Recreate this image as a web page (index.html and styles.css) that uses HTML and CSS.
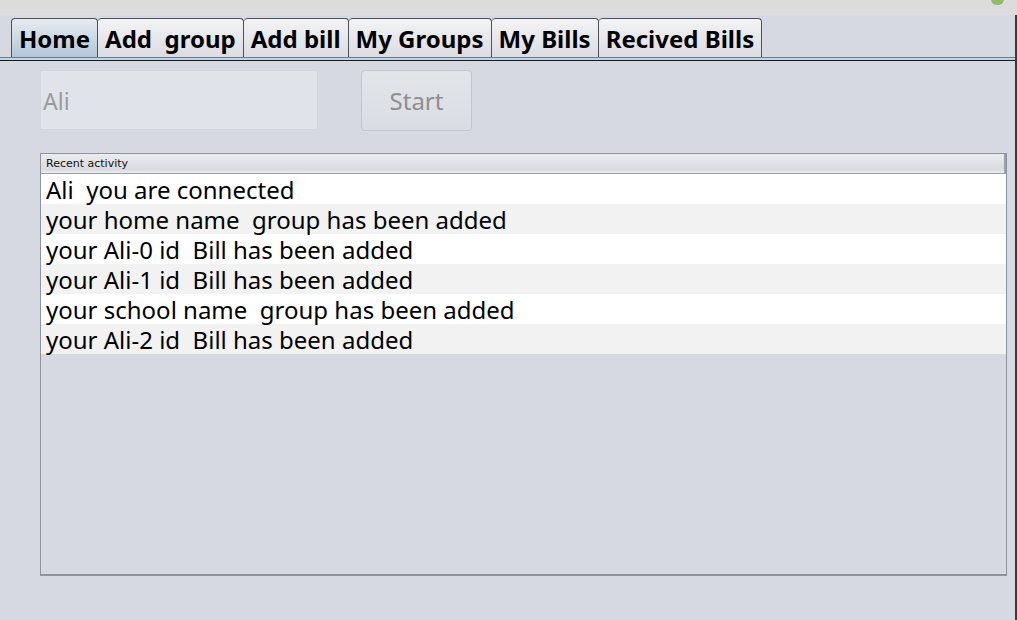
FILE: index.html
```html
<!DOCTYPE html>
<html>
<head>
<meta charset="utf-8">
<link rel="stylesheet" href="styles.css">
</head>
<body>
<div class="window">
  <div class="titlebar"><span class="dot"></span></div>
  <div class="frame">
    <div class="tabbar">
      <div class="tab active">Home</div>
      <div class="tab">Add&nbsp; group</div>
      <div class="tab">Add bill</div>
      <div class="tab">My Groups</div>
      <div class="tab">My Bills</div>
      <div class="tab">Recived Bills</div>
    </div>
    <div class="tabline"></div>
    <div class="content">
      <div class="controls">
        <div class="field">Ali</div>
        <div class="button">Start</div>
      </div>
      <div class="panel">
        <div class="panel-head">Recent activity</div>
        <div class="row">Ali&nbsp; you are connected</div>
        <div class="row alt">your home name&nbsp; group has been added</div>
        <div class="row">your Ali-0 id&nbsp; Bill has been added</div>
        <div class="row alt">your Ali-1 id&nbsp; Bill has been added</div>
        <div class="row">your school name&nbsp; group has been added</div>
        <div class="row alt">your Ali-2 id&nbsp; Bill has been added</div>
      </div>
    </div>
  </div>
</div>
</body>
</html>
```
FILE: styles.css
```css
html, body {
  margin: 0;
  padding: 0;
  width: 1017px;
  height: 620px;
  overflow: hidden;
  background: #d6d9e1;
  font-family: "Noto Sans", "Open Sans", sans-serif;
}
.window {
  position: relative;
  width: 1017px;
  height: 620px;
  display: flex;
  flex-direction: column;
}
.titlebar {
  height: 15px;
  background: #dcdcdc;
  position: relative;
}
.dot {
  position: absolute;
  left: 991px;
  top: -6px;
  width: 13px;
  height: 11px;
  border-radius: 50%;
  background: #8fbf62;
}
.frame {
  flex: 1;
  display: flex;
  flex-direction: column;
  border-right: 2px solid #3a3a3a;
  width: 1015px;
}
.tabbar {
  display: flex;
  padding: 3px 0 0 11px;
  height: 39px;
}
.tab {
  box-sizing: border-box;
  height: 39px;
  padding: 0 7px 0 7px;
  border: 1px solid #4d5158;
  border-bottom: none;
  border-left: none;
  border-radius: 4px 4px 0 0;
  background: linear-gradient(#f3f3f5, #dcdde2);
  font-weight: 700;
  font-size: 24px;
  line-height: 40px;
  color: #000;
  white-space: nowrap;
}
.tab:first-child {
  border-left: 1px solid #4d5158;
}
.tab.active {
  background: linear-gradient(#e6ebf0, #b3c6d8);
}
.tabline {
  border-top: 1px solid #737a84;
  border-bottom: 1px solid #141a26;
  background: #c3d3e3;
  box-sizing: content-box;
  height: 2px;
}
.content {
  padding: 9px 0 0 40px;
  display: flex;
  flex-direction: column;
}
.controls {
  display: flex;
  gap: 43px;
}
.field {
  box-sizing: border-box;
  width: 278px;
  height: 60px;
  background: #e0e3e9;
  border: 1px solid #d3d6dc;
  color: #9b9b9b;
  font-size: 23px;
  line-height: 60px;
  padding-left: 2px;
}
.button {
  box-sizing: border-box;
  width: 111px;
  height: 61px;
  border: 1px solid #c2c5cb;
  border-radius: 4px;
  background: linear-gradient(#e2e5ea, #d9dce2);
  color: #8e8e8e;
  font-size: 24px;
  line-height: 60px;
  text-align: center;
}
.panel {
  margin-top: 22px;
  box-sizing: border-box;
  width: 967px;
  height: 423px;
  border: 1px solid #8f949c;
  border-bottom: 2px solid #8f949c;
}
.panel-head {
  height: 20px;
  box-sizing: border-box;
  border-bottom: 1px solid #9aa0a8;
  border-right: 2px solid #9aa0a8;
  background: linear-gradient(#ececef, #d9dbe0 80%, #e8ebf0);
  font-family: "DejaVu Sans", sans-serif;
  font-size: 11px;
  line-height: 19px;
  padding-left: 5px;
  color: #111;
}
.row {
  height: 30px;
  background: #ffffff;
  font-size: 24px;
  line-height: 32px;
  padding-left: 5px;
  color: #000;
  white-space: nowrap;
}
.row.alt {
  background: #f2f2f2;
}
```
